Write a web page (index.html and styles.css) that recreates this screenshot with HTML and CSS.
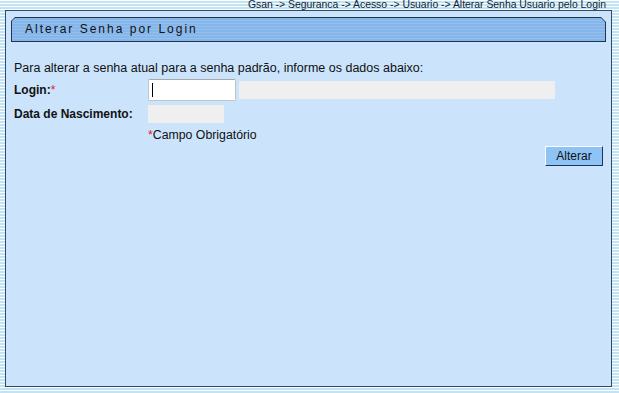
FILE: index.html
```html
<!DOCTYPE html>
<html lang="pt-BR">
<head>
  <meta charset="UTF-8">
  <title>Alterar Senha por Login</title>
  <link rel="stylesheet" href="styles.css">
</head>
<body>
  <div class="breadcrumb">Gsan -&gt; Seguranca -&gt; Acesso -&gt; Usuario -&gt; Alterar Senha Usuario pelo Login</div>

  <div class="panel">
    <div class="title-bar">
      <div class="title-inner">Alterar Senha por Login</div>
    </div>

    <div class="content">
      <p class="intro">Para alterar a senha atual para a senha padrão, informe os dados abaixo:</p>

      <div class="form-grid">
        <label class="label">Login:<span class="req">*</span></label>
        <div class="row">
          <div class="field field-login"><span class="caret"></span></div>
          <div class="field-ro field-name"></div>
        </div>

        <label class="label">Data de Nascimento:</label>
        <div class="row">
          <div class="field-ro field-date"></div>
        </div>

        <span></span>
        <div class="required-note"><span class="req">*</span>Campo Obrigatório</div>
      </div>

      <div class="actions">
        <button class="btn">Alterar</button>
      </div>
    </div>
  </div>
</body>
</html>
```

FILE: styles.css
```css
body {
  margin: 0;
  font-family: "Liberation Sans", Arial, sans-serif;
  font-size: 12px;
  color: #111;
  background: repeating-linear-gradient(to bottom, #ffffff 0, #ffffff 1px, #c2e3f3 1px, #c2e3f3 3px);
  width: 619px;
  height: 393px;
  overflow: hidden;
}

.breadcrumb {
  height: 10px;
  line-height: 10px;
  font-size: 10.4px;
  text-align: right;
  padding-right: 13px;
  color: #0b1f3a;
  white-space: nowrap;
}

.panel {
  box-sizing: border-box;
  margin-left: 5px;
  width: 607px;
  height: 377px;
  background: #cbe4fc;
  border: 1px solid #2e4b69;
}

.title-bar {
  margin: 6px 0 0 5px;
  width: 595px;
  height: 25px;
  padding: 1px;
  box-sizing: border-box;
  background: #1f3550;
  clip-path: polygon(4px 0, calc(100% - 5px) 0, 100% 5px, 100% 100%, 0 100%, 0 4px);
}

.title-inner {
  height: 100%;
  padding-left: 13px;
  line-height: 23px;
  letter-spacing: 2px;
  color: #111;
  background: repeating-linear-gradient(to bottom, #86b6e9 0, #86b6e9 2px, #93c0ef 2px, #93c0ef 3px);
  clip-path: polygon(3px 0, calc(100% - 4px) 0, 100% 4px, 100% 100%, 0 100%, 0 3px);
}

.content {
  padding: 19px 8px 0 8px;
}

.intro {
  margin: 0;
  font-size: 12.5px;
  line-height: 14px;
}

.form-grid {
  display: grid;
  grid-template-columns: 134px auto;
  row-gap: 4px;
  align-items: center;
  margin-top: 4px;
}

.label {
  font-weight: bold;
}

.req {
  color: #e0201b;
  font-weight: normal;
}

.row {
  display: flex;
  align-items: center;
  gap: 3px;
}

.field {
  box-sizing: border-box;
  width: 88px;
  height: 22px;
  background: #fff;
  border: 1px solid #c4c4c4;
  border-top-color: #a8a8a8;
  border-radius: 2px;
  display: flex;
  align-items: center;
  padding-left: 3px;
}

.caret {
  width: 1px;
  height: 14px;
  background: #000;
}

.field-ro {
  background: #efefef;
  height: 18px;
}

.field-name {
  width: 316px;
}

.field-date {
  width: 76px;
}

.required-note {
  font-size: 12.3px;
  line-height: 14px;
  margin-top: 1px;
}

.actions {
  display: flex;
  justify-content: flex-end;
  margin-top: 4px;
}

.btn {
  width: 58px;
  height: 20px;
  padding: 0;
  font-family: "Liberation Sans", Arial, sans-serif;
  font-size: 12px;
  color: #111;
  background: #8ec3f6;
  border: 1px solid;
  border-color: #ffffff #1f3550 #1f3550 #ffffff;
}
```
